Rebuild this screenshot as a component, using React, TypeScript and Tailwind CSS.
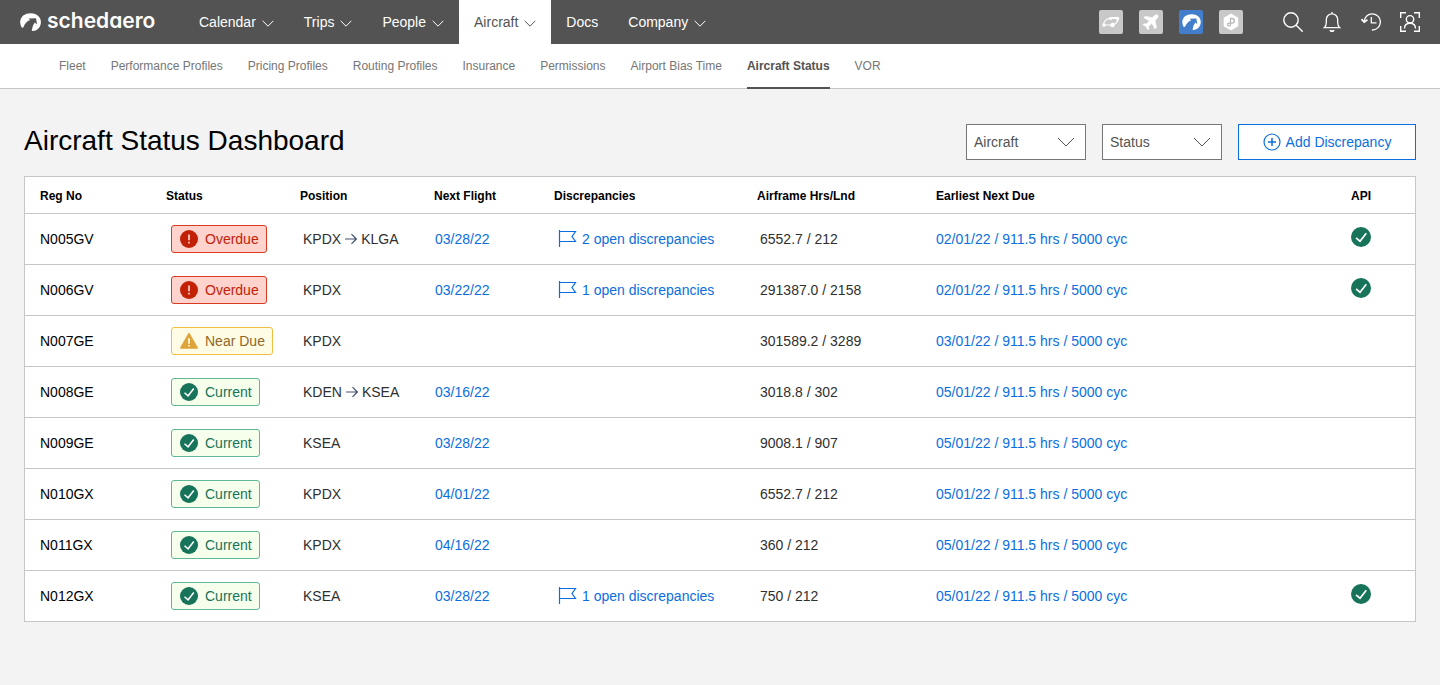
import { ReactNode, useState } from "react";

type StatusType = "Overdue" | "Near Due" | "Current";

interface AircraftRow {
    regNo: string;
    status: StatusType;
    position: string[];
    nextFlight?: string;
    discrepancies?: number;
    airframe: string;
    nextDue: string;
    api?: boolean;
}

const menuItems = [
    { label: "Calendar", hasMenu: true },
    { label: "Trips", hasMenu: true },
    { label: "People", hasMenu: true },
    { label: "Aircraft", hasMenu: true },
    { label: "Docs", hasMenu: false },
    { label: "Company", hasMenu: true },
];

const subMenuItems = [
    "Fleet",
    "Performance Profiles",
    "Pricing Profiles",
    "Routing Profiles",
    "Insurance",
    "Permissions",
    "Airport Bias Time",
    "Aircraft Status",
    "VOR",
];

const aircraft: AircraftRow[] = [
    { regNo: "N005GV", status: "Overdue", position: ["KPDX", "KLGA"], nextFlight: "03/28/22", discrepancies: 2, airframe: "6552.7 / 212", nextDue: "02/01/22 / 911.5 hrs / 5000 cyc", api: true },
    { regNo: "N006GV", status: "Overdue", position: ["KPDX"], nextFlight: "03/22/22", discrepancies: 1, airframe: "291387.0 / 2158", nextDue: "02/01/22 / 911.5 hrs / 5000 cyc", api: true },
    { regNo: "N007GE", status: "Near Due", position: ["KPDX"], airframe: "301589.2 / 3289", nextDue: "03/01/22 / 911.5 hrs / 5000 cyc" },
    { regNo: "N008GE", status: "Current", position: ["KDEN", "KSEA"], nextFlight: "03/16/22", airframe: "3018.8 / 302", nextDue: "05/01/22 / 911.5 hrs / 5000 cyc" },
    { regNo: "N009GE", status: "Current", position: ["KSEA"], nextFlight: "03/28/22", airframe: "9008.1 / 907", nextDue: "05/01/22 / 911.5 hrs / 5000 cyc" },
    { regNo: "N010GX", status: "Current", position: ["KPDX"], nextFlight: "04/01/22", airframe: "6552.7 / 212", nextDue: "05/01/22 / 911.5 hrs / 5000 cyc" },
    { regNo: "N011GX", status: "Current", position: ["KPDX"], nextFlight: "04/16/22", airframe: "360 / 212", nextDue: "05/01/22 / 911.5 hrs / 5000 cyc" },
    { regNo: "N012GX", status: "Current", position: ["KSEA"], nextFlight: "03/28/22", discrepancies: 1, airframe: "750 / 212", nextDue: "05/01/22 / 911.5 hrs / 5000 cyc", api: true },
];

const badgeStyles: Record<StatusType, string> = {
    Overdue: "border-[#d93a20] bg-[#ffd3cd] text-[#c22106]",
    "Near Due": "border-[#efbf42] bg-[#fffce6] text-[#916626]",
    Current: "border-[#5fb796] bg-[#f5ffeb] text-[#17735a]",
};

function ChevronIcon({ className }: { className: string }) {
    return (
        <svg viewBox="0 0 18 10" fill="none" stroke="currentColor" className={className} aria-hidden="true">
            <path d="M1 1l8 8 8-8" vectorEffect="non-scaling-stroke" />
        </svg>
    );
}

function SwooshIcon({ className }: { className: string }) {
    return (
        <svg viewBox="0 0 21 18" fill="currentColor" className={className} aria-hidden="true">
            <path d="M1.400 14C-.8 9.600 0 5.400 3.200 2.600C6.500-.2 12-.6 16.200 1.400C19.800 3.200 21.400 6.800 20.800 10.400C20.200 14.600 17 17.700 12.800 18C11.800 18 11.500 17.400 11.900 16.700C12.600 15 12.400 12.600 14.800 9.600L17 11.400L16 5.200L8.400 5.400L10.200 6.900C7 8 4.600 10.600 3.500 13.900C3 15 1.900 15 1.400 14Z" />
        </svg>
    );
}

function CheckIcon({ className }: { className: string }) {
    return (
        <svg viewBox="0 0 20 20" fill="none" className={className} role="img" aria-label="OK">
            <circle cx="10" cy="10" r="10" fill="#17735a" />
            <path d="M5 10.800l4 3.400 6.300-8" stroke="#fff" strokeWidth="1.700" />
        </svg>
    );
}

function StatusIcon({ status }: { status: StatusType }) {
    if (status === "Current") return <CheckIcon className="size-[18px]" />;

    if (status === "Near Due") {
        return (
            <svg viewBox="0 0 17 17" className="size-[18px]" aria-hidden="true">
                <path d="M8.500 1.800L16 15H1z" fill="#dea43a" stroke="#dea43a" strokeWidth="1.800" strokeLinejoin="round" />
                <path d="M8.500 6v5M8.500 12.200v1.600" stroke="#fffce6" strokeWidth="1.600" />
            </svg>
        );
    }

    return (
        <svg viewBox="0 0 17 17" className="size-[18px]" aria-hidden="true">
            <circle cx="8.500" cy="8.500" r="8.500" fill="#c22106" />
            <path d="M8.500 4.200v5.400M8.500 11v1.700" stroke="#ffd3cd" strokeWidth="1.600" />
        </svg>
    );
}

function FlagIcon() {
    return (
        <svg viewBox="0 0 19 17" fill="none" stroke="currentColor" strokeWidth="1.200" className="h-[17px] w-[19px]" aria-hidden="true">
            <path d="M1.500 0v17M1.500 1.500h16l-3.500 5 3.500 5h-16" />
        </svg>
    );
}

function RouteArrow() {
    return (
        <svg viewBox="0 0 12 12" fill="none" stroke="#42526e" strokeWidth="1.200" className="size-3" aria-label="to">
            <path d="M0 6h11M6.500 1.200L11.300 6l-4.800 4.800" />
        </svg>
    );
}

function AppTile({ label, active, children }: { label: string; active?: boolean; children: ReactNode }) {
    return (
        <button aria-label={label} className={`flex size-6 items-center justify-center rounded-xs text-white ${active ? "bg-[#427ecb]" : "bg-[#c8c8c8]"}`}>
            {children}
        </button>
    );
}

function TopBar() {
    return (
        <header className="flex h-11 items-center bg-[#535353] px-5 text-white">
            <a href="#" className="flex w-[164px] items-center gap-[6px]">
                <SwooshIcon className="h-[18px] w-[21px]" />
                <span className="pb-[2px] font-['Inter',sans-serif] text-[21px] leading-6 font-semibold [font-feature-settings:'cv11']">schedaero</span>
            </a>

            <nav className="flex h-full text-sm">
                {menuItems.map((item) => (
                    <a
                        key={item.label}
                        href="#"
                        className={`flex items-center gap-[6px] px-[15px] ${item.label === "Aircraft" ? "bg-white text-[#535353]" : ""}`}
                    >
                        {item.label}
                        {item.hasMenu && <ChevronIcon className="mt-[2px] h-[7px] w-3" />}
                    </a>
                ))}
            </nav>

            <div className="ml-auto flex gap-4">
                <AppTile label="Network">
                    <svg viewBox="0 0 24 24" className="size-6" fill="none" stroke="currentColor" strokeWidth="1.200">
                        <path d="M4.500 15C4 11.500 8 8.500 12 8h7c.3 3.500-2.500 6.500-6 7H5z" />
                        <path d="M12.500 8h6.500" strokeWidth="2" />
                        <g fill="currentColor" stroke="none">
                            <circle cx="5" cy="15" r="1.700" />
                            <circle cx="13.500" cy="15" r="2.200" />
                            <circle cx="11.500" cy="8.500" r="1.500" />
                            <circle cx="18.500" cy="8.500" r="1.700" />
                        </g>
                    </svg>
                </AppTile>
                <AppTile label="Flights">
                    <svg viewBox="0 0 24 24" className="size-6" fill="currentColor" stroke="currentColor" strokeWidth=".6" strokeLinejoin="round">
                        <path d="M18.700 5.300c-1-.9-2.500-.5-3.400.4L13.200 7.800 6.300 6.200 4.800 7.700l5.500 3.100-2.900 3.300-2.400-.4-1.100 1.100 3.200 1.700 1.700 3.300 1.200-1.200-.4-2.400 3.300-2.900 3.100 5.600 1.500-1.500-1.500-7 2.200-2.100c.9-.9 1.300-2.200.5-3z" />
                    </svg>
                </AppTile>
                <AppTile label="Schedaero" active>
                    <SwooshIcon className="h-4 w-[19px]" />
                </AppTile>
                <AppTile label="Payments">
                    <svg viewBox="0 0 24 24" className="size-6">
                        <path d="M12 4.500l6.500 3.700v7.600L12 19.500l-6.500-3.700V8.200z" fill="currentColor" stroke="currentColor" strokeWidth="1.500" strokeLinejoin="round" />
                        <path d="M11.500 12.500V8.500h1.500a2.300 2.300 0 010 4.600h-3a1.500 1.500 0 101.500 1.500v-2.100" fill="none" stroke="#b8b8b8" strokeWidth="1.300" />
                    </svg>
                </AppTile>
            </div>

            <div className="ml-10 flex gap-[19px]">
                <button aria-label="Search">
                    <svg viewBox="0 0 20 20" className="size-5" fill="none" stroke="currentColor" strokeWidth="1.400">
                        <circle cx="8" cy="8" r="7.200" />
                        <path d="M13.200 13.200l6.500 6.500" />
                    </svg>
                </button>
                <button aria-label="Notifications">
                    <svg viewBox="0 0 20 20" className="size-5" fill="none" stroke="currentColor" strokeWidth="1.300">
                        <path d="M10 0v1.800M2.300 15.700h15.400c-1.500-1.300-2-2.900-2-5V7.500a5.700 5.700 0 00-11.400 0v3.200c0 2.100-.5 3.700-2 5z" />
                        <path d="M8.200 18a1.900 1.900 0 003.600 0" strokeWidth="1.800" />
                    </svg>
                </button>
                <button aria-label="History">
                    <svg viewBox="0 0 20 20" className="size-5" fill="none" stroke="currentColor" strokeWidth="1.300">
                        <path d="M3.200 9.800A8.100 8.100 0 1110.900 18" />
                        <path d="M.5 7.200l2.700 2.900 3.200-2.400" strokeWidth="1.700" />
                        <path d="M10.300 5v5.800h5.200" />
                    </svg>
                </button>
                <button aria-label="Account">
                    <svg viewBox="0 0 20 20" className="size-5" fill="none" stroke="currentColor" strokeWidth="1.400">
                        <path d="M.7 6V.7H6M14 .7h5.300V6M19.300 14v5.300H14M6 19.300H.7V14" />
                        <circle cx="10" cy="7.300" r="3.700" />
                        <path d="M4.500 16.500c0-3.500 2.400-5.300 5.500-5.300s5.500 1.800 5.500 5.300" />
                    </svg>
                </button>
            </div>
        </header>
    );
}

function SubMenu() {
    return (
        <nav className="flex h-[45px] gap-[25px] border-b border-[#c6c6c6] bg-white px-[59px] text-xs text-[#767676]">
            {subMenuItems.map((item) => (
                <a
                    key={item}
                    href="#"
                    className={`-mb-px flex items-center border-b-2 ${item === "Aircraft Status" ? "border-[#535353] font-bold text-[#535353]" : "border-transparent"}`}
                >
                    {item}
                </a>
            ))}
        </nav>
    );
}

interface FilterSelectProps {
    label: string;
    options: string[];
}

function FilterSelect({ label, options }: FilterSelectProps) {
    const [value, setValue] = useState("");

    return (
        <div className="relative">
            <select
                aria-label={label}
                value={value}
                onChange={(e) => setValue(e.target.value)}
                className="h-9 w-[120px] appearance-none rounded-none border border-[#767676] bg-white pr-8 pl-[7px] text-sm text-[#535353]"
            >
                <option value="">{label}</option>
                {options.map((option) => <option key={option} value={option}>{option}</option>)}
            </select>
            <ChevronIcon className="pointer-events-none absolute top-[13px] right-[11px] h-[10px] w-[18px] text-[#535353]" />
        </div>
    );
}

function AircraftTable() {
    return (
        <div className="mt-4 border border-[#c6c6c6] bg-white">
            <table className="w-full table-fixed border-collapse text-left text-sm text-[#2f2f2f]">
                <colgroup>
                    <col className="w-[126px]" />
                    <col className="w-[134px]" />
                    <col className="w-[134px]" />
                    <col className="w-[120px]" />
                    <col className="w-[203px]" />
                    <col className="w-[179px]" />
                    <col />
                    <col className="w-[79px]" />
                </colgroup>
                <thead>
                    <tr className="h-9 border-b border-[#c6c6c6] text-xs text-black">
                        <th className="pt-[2px] pl-[15px]">Reg No</th>
                        <th className="pt-[2px] pl-[15px]">Status</th>
                        <th className="pt-[2px] pl-[15px]">Position</th>
                        <th className="pt-[2px] pl-[15px]">Next Flight</th>
                        <th className="pt-[2px] pl-[15px]">Discrepancies</th>
                        <th className="pt-[2px] pl-[15px]">Airframe Hrs/Lnd</th>
                        <th className="pt-[2px] pl-[15px]">Earliest Next Due</th>
                        <th className="pt-[2px] pl-[15px]">API</th>
                    </tr>
                </thead>
                <tbody>
                    {aircraft.map((row) => (
                        <tr key={row.regNo} className="h-[51px] border-b border-[#c6c6c6] last:border-b-0">
                            <td className="pl-[15px] text-black">{row.regNo}</td>
                            <td className="pl-5">
                                <span className={`flex h-7 w-fit items-center gap-[7px] rounded-[3px] border pr-[7px] pl-2 ${badgeStyles[row.status]}`}>
                                    <StatusIcon status={row.status} />
                                    {row.status}
                                </span>
                            </td>
                            <td className="pl-[18px]">
                                <span className="flex items-center gap-1">
                                    {row.position[0]}
                                    {row.position[1] && <RouteArrow />}
                                    {row.position[1]}
                                </span>
                            </td>
                            <td className="pl-4 text-[#0b6ee0]">
                                {row.nextFlight && <a href="#">{row.nextFlight}</a>}
                            </td>
                            <td className="pl-[19px] text-[#0b6ee0]">
                                {row.discrepancies && (
                                    <a href="#" className="flex items-center gap-[5px]">
                                        <FlagIcon />
                                        {row.discrepancies} open discrepancies
                                    </a>
                                )}
                            </td>
                            <td className="pl-[18px]">{row.airframe}</td>
                            <td className="pl-[15px] text-[#0b6ee0]"><a href="#">{row.nextDue}</a></td>
                            <td className="pb-1 pl-[15px]">{row.api && <CheckIcon className="size-5" />}</td>
                        </tr>
                    ))}
                </tbody>
            </table>
        </div>
    );
}

export default function App() {
    return (
        <div className="min-h-screen bg-[#f3f3f3] font-['Liberation_Sans',Arial,sans-serif]">
            <TopBar />
            <SubMenu />

            <main className="px-6 pt-[35px] pb-16">
                <div className="flex items-center gap-4">
                    <h1 className="mr-auto pb-[2px] text-[28px] leading-8 text-black">Aircraft Status Dashboard</h1>
                    <FilterSelect label="Aircraft" options={aircraft.map((row) => row.regNo)} />
                    <FilterSelect label="Status" options={["Overdue", "Near Due", "Current"]} />
                    <button className="flex h-9 w-[178px] items-center justify-center gap-[5px] border border-[#0b6ee0] bg-white text-sm text-[#0b6ee0]">
                        <svg viewBox="0 0 18 18" fill="none" stroke="currentColor" strokeWidth="1.200" className="size-[18px]" aria-hidden="true">
                            <circle cx="9" cy="9" r="8" />
                            <path d="M9 5v8M5 9h8" strokeWidth="1.500" />
                        </svg>
                        Add Discrepancy
                    </button>
                </div>

                <AircraftTable />
            </main>
        </div>
    );
}
